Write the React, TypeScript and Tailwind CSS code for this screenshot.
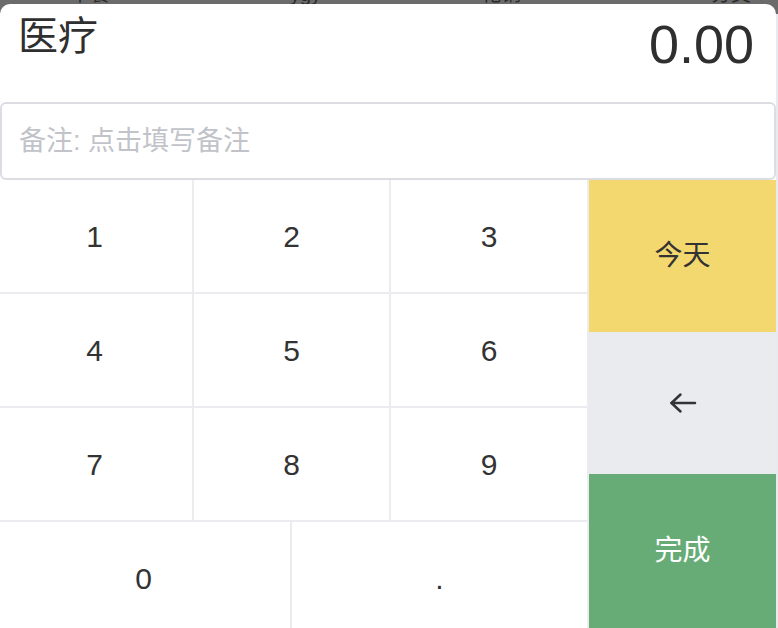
import React, { useState } from "react";

const FONT = "font-['Liberation_Sans','Noto_Sans_CJK_SC',sans-serif]";

function ArrowBack() {
    return (
        <svg width="28" height="22" viewBox="0 0 28 22" fill="none">
            <path d="M26 11H2.5" stroke="#333" strokeWidth="2.5" strokeLinecap="round" />
            <path d="M11.5 2.5L2.5 11L11.5 19.5" stroke="#333" strokeWidth="2.5" strokeLinecap="round" strokeLinejoin="round" />
        </svg>
    );
}

export default function App() {
    const [montant, setMontant] = useState("0.00");

    const rows = [
        ["1", "2", "3"],
        ["4", "5", "6"],
        ["7", "8", "9"],
    ];
    const widths = ["w-[197px]", "w-[197px]", "w-[198px]"];

    const press = (k: string) => {
        setMontant((m) => (m === "0.00" ? k : m + k));
    };

    return (
        <div className={`w-[778px] h-[628px] overflow-hidden bg-[#6b6b6b] flex flex-col ${FONT}`}>
            {/* fond derrière la feuille */}
            <div className="h-[4px] overflow-hidden flex text-[20px] leading-none text-[#2b2b2b] shrink-0">
                <span className="ml-[70px] -mt-[16px]">午餐</span>
                <span className="ml-[180px] -mt-[16px]">ygy</span>
                <span className="ml-[160px] -mt-[16px]">花销</span>
                <span className="ml-[190px] -mt-[16px]">分类</span>
            </div>

            <div className="flex flex-1 min-h-0">
                <div className="w-[776px] bg-white rounded-t-[10px] flex flex-col overflow-hidden">
                    {/* En-tête */}
                    <div className="h-[98px] shrink-0 flex justify-between items-start pl-[18px] pr-[20px] text-[#2f2f2f]">
                        <span className="text-[40px] leading-none mt-[12px]">医疗</span>
                        <span className="text-[54px] leading-none mt-[13px] mr-[2px]">{montant}</span>
                    </div>

                    {/* Remarque */}
                    <div className="h-[78px] shrink-0 border-2 border-[#dcdde3] rounded-[6px] flex items-center px-[17px]">
                        <span className="text-[27px] text-[#c1c3c9]">备注: 点击填写备注</span>
                    </div>

                    {/* Clavier */}
                    <div className="flex flex-1 min-h-0">
                        <div className="w-[592px] -ml-[3px] flex flex-col">
                            {rows.map((row) => (
                                <div key={row[0]} className="flex h-[114px] shrink-0">
                                    {row.map((k, i) => (
                                        <button
                                            key={k}
                                            onClick={() => press(k)}
                                            className={`${widths[i]} h-full border-r-2 border-b-2 border-[#ebebf0] text-[30px] text-[#333] flex items-center justify-center`}
                                        >
                                            {k}
                                        </button>
                                    ))}
                                </div>
                            ))}
                            <div className="flex h-[114px] shrink-0">
                                <button
                                    onClick={() => press("0")}
                                    className="w-[295px] h-full border-r-2 border-[#ebebf0] text-[30px] text-[#333] flex items-center justify-center pb-[2px]"
                                >
                                    0
                                </button>
                                <button
                                    onClick={() => press(".")}
                                    className="w-[297px] h-full border-r-2 border-[#ebebf0] text-[30px] text-[#333] flex items-center justify-center pb-[2px]"
                                >
                                    .
                                </button>
                            </div>
                        </div>

                        <div className="w-[187px] flex flex-col">
                            <button className="h-[152px] shrink-0 bg-[#f3d870] text-[28px] text-[#333] flex items-center justify-center">
                                今天
                            </button>
                            <button
                                onClick={() => setMontant((m) => (m.length > 1 ? m.slice(0, -1) : "0.00"))}
                                className="h-[142px] shrink-0 bg-[#eaebef] flex items-center justify-center"
                            >
                                <ArrowBack />
                            </button>
                            <button className="flex-1 bg-[#67ac76] text-[28px] text-white flex items-center justify-center">
                                完成
                            </button>
                        </div>
                    </div>
                </div>
                <div className="w-[2px] mt-[10px] bg-[#e9eaef]" />
            </div>
        </div>
    );
}
